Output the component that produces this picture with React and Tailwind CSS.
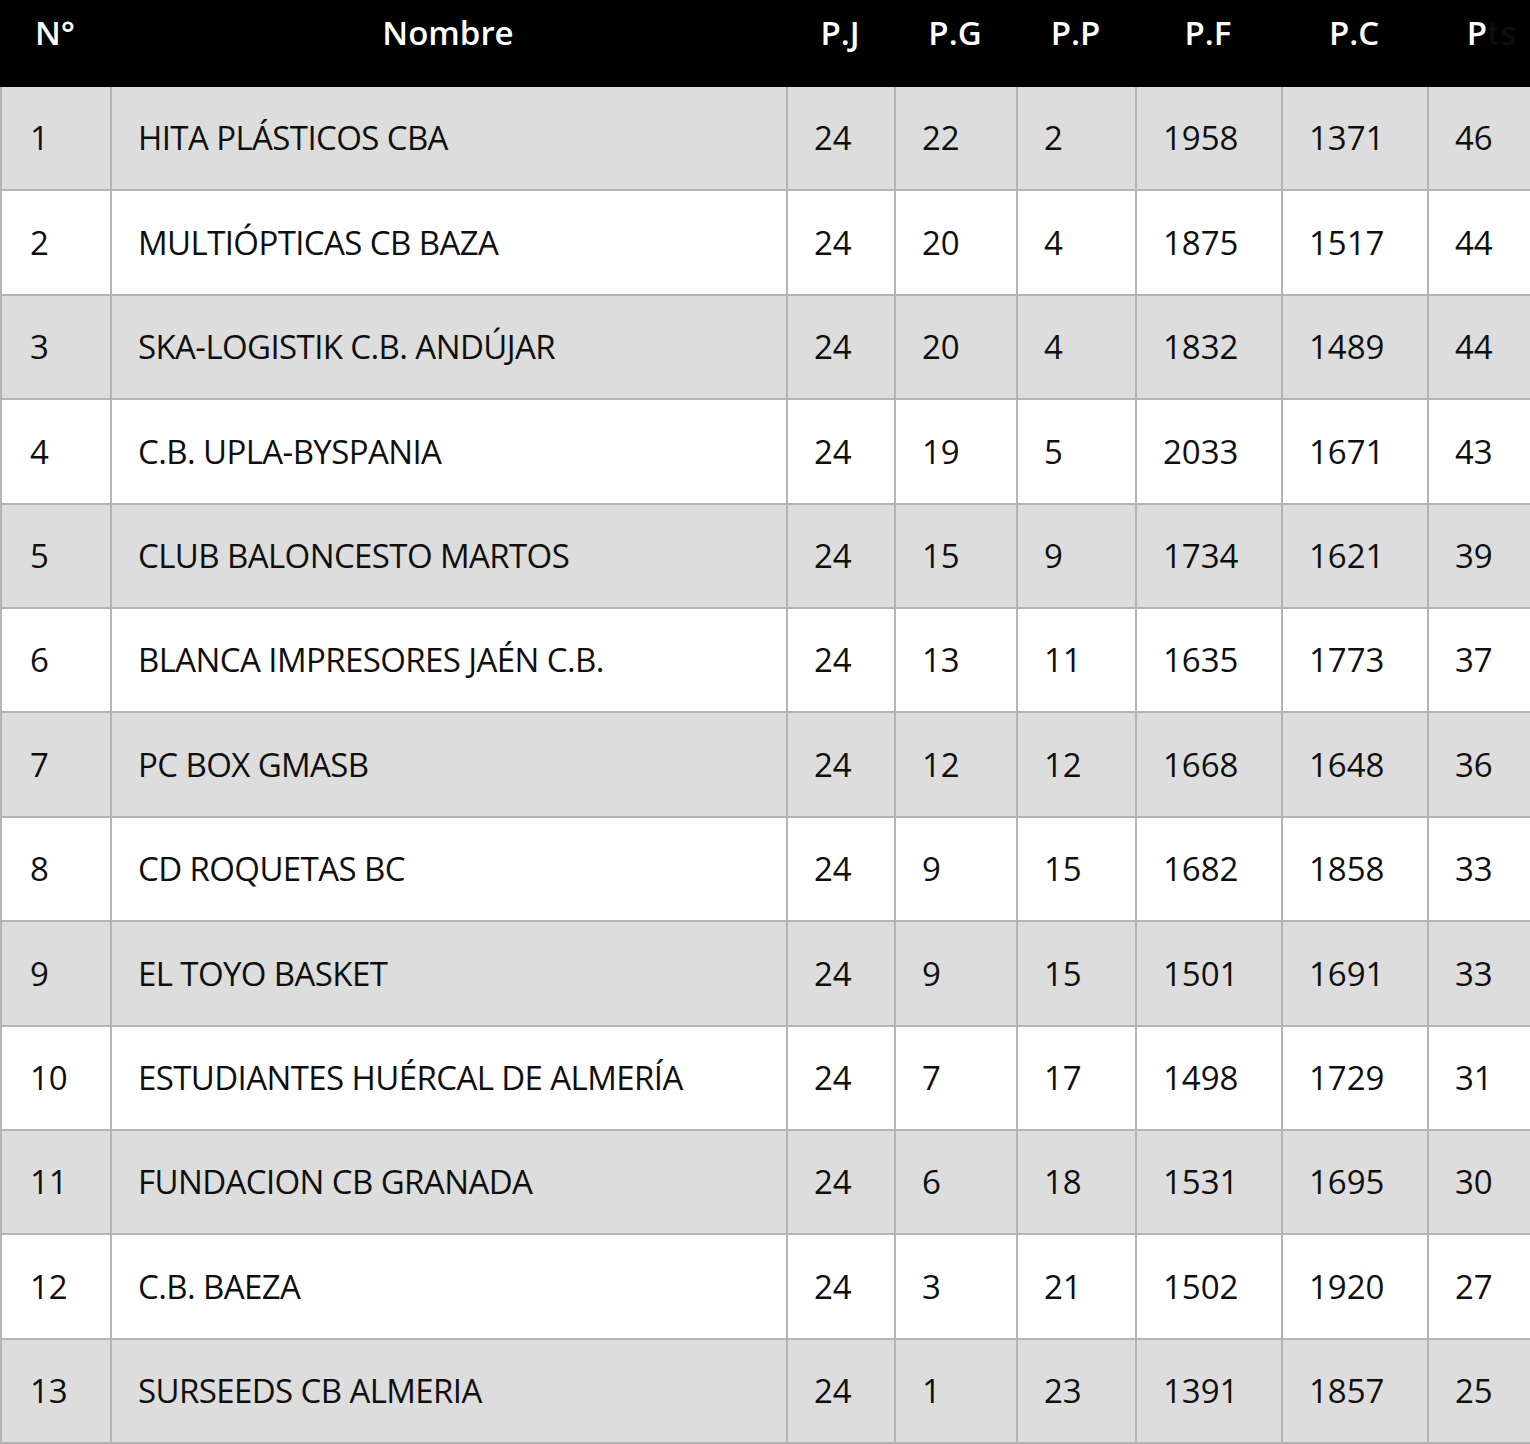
const TEAMS = [
  ['1', 'HITA PLÁSTICOS CBA', 24, 22, 2, 1958, 1371, 46],
  ['2', 'MULTIÓPTICAS CB BAZA', 24, 20, 4, 1875, 1517, 44],
  ['3', 'SKA-LOGISTIK C.B. ANDÚJAR', 24, 20, 4, 1832, 1489, 44],
  ['4', 'C.B. UPLA-BYSPANIA', 24, 19, 5, 2033, 1671, 43],
  ['5', 'CLUB BALONCESTO MARTOS', 24, 15, 9, 1734, 1621, 39],
  ['6', 'BLANCA IMPRESORES JAÉN C.B.', 24, 13, 11, 1635, 1773, 37],
  ['7', 'PC BOX GMASB', 24, 12, 12, 1668, 1648, 36],
  ['8', 'CD ROQUETAS BC', 24, 9, 15, 1682, 1858, 33],
  ['9', 'EL TOYO BASKET', 24, 9, 15, 1501, 1691, 33],
  ['10', 'ESTUDIANTES HUÉRCAL DE ALMERÍA', 24, 7, 17, 1498, 1729, 31],
  ['11', 'FUNDACION CB GRANADA', 24, 6, 18, 1531, 1695, 30],
  ['12', 'C.B. BAEZA', 24, 3, 21, 1502, 1920, 27],
  ['13', 'SURSEEDS CB ALMERIA', 24, 1, 23, 1391, 1857, 25],
];

const HEADERS = ['N°', 'Nombre', 'P.J', 'P.G', 'P.P', 'P.F', 'P.C'];

export default function App() {
  return (
    <div className="w-[1530px] h-[1444px] overflow-hidden bg-white" style={{ fontFamily: '"Open Sans", sans-serif' }}>
      <div className="w-[1560px] grid grid-cols-[110px_676px_108px_122px_119px_146px_146px_133px]">
        {HEADERS.map((h) => (
          <div key={h} className="h-[87px] bg-black text-white font-semibold text-[33px] flex items-center justify-center pb-[22px]">
            {h}
          </div>
        ))}
        <div className="h-[87px] bg-black text-white font-semibold text-[33px] flex items-center justify-center pb-[22px] pr-1">
          <span>P<span className="text-[#0d0d0d]">ts</span></span>
        </div>

        {TEAMS.map((row, i) => (
          row.map((cell, j) => (
            <div
              key={`${i}-${j}`}
              className={`h-[104.4px] flex items-center text-[33px] text-[#0f0f0f] border-b-2 border-l-2 border-[#b4b4b4] ${j === 0 ? 'pl-[28px]' : 'pl-[26px]'} ${j === 1 ? 'tracking-[-0.6px]' : ''} ${i % 2 === 0 ? 'bg-[#dddddd]' : 'bg-white'}`}
            >
              {cell}
            </div>
          ))
        ))}
      </div>
    </div>
  );
}
